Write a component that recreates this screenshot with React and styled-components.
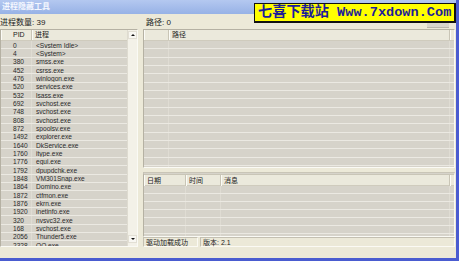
import React from 'react'
import styled, { createGlobalStyle } from 'styled-components'

const GlobalStyle = createGlobalStyle`
  html, body {
    margin: 0;
    padding: 0;
    background: #ece9d8;
  }
  * {
    box-sizing: border-box;
  }
`

const processes = [
  ['0', '<System Idle>'],
  ['4', '<System>'],
  ['380', 'smss.exe'],
  ['452', 'csrss.exe'],
  ['476', 'winlogon.exe'],
  ['520', 'services.exe'],
  ['532', 'lsass.exe'],
  ['692', 'svchost.exe'],
  ['748', 'svchost.exe'],
  ['808', 'svchost.exe'],
  ['872', 'spoolsv.exe'],
  ['1492', 'explorer.exe'],
  ['1640', 'DkService.exe'],
  ['1760', 'itype.exe'],
  ['1776', 'egui.exe'],
  ['1792', 'dpupdchk.exe'],
  ['1848', 'VM301Snap.exe'],
  ['1864', 'Domino.exe'],
  ['1872', 'ctfmon.exe'],
  ['1876', 'ekrn.exe'],
  ['1920', 'inetinfo.exe'],
  ['320', 'nvsvc32.exe'],
  ['168', 'svchost.exe'],
  ['2056', 'Thunder5.exe'],
  ['2328', 'QQ.exe'],
]

const font = `"Liberation Sans", "Noto Sans CJK SC", sans-serif`

const Window = styled.div`
  position: relative;
  width: 459px;
  height: 261px;
  background: #ece9d8;
  border-right: 3px solid #4a5cd0;
  border-bottom: 3px solid #4a5cd0;
  font-family: ${font};
  color: #222;
  overflow: hidden;
  display: flex;
  flex-direction: column;
`

const TitleBar = styled.div`
  height: 14px;
  flex: none;
  padding-left: 2px;
  background: linear-gradient(to bottom, #b4c8f0, #97b2e6);
  color: #f4f7ff;
  font-size: 8px;
  line-height: 14px;
  font-weight: bold;
`

const Body = styled.div`
  flex: 1;
  display: flex;
  gap: 5px;
  padding: 0 1px 11px 0;
  min-height: 0;
`

const Column = styled.div`
  width: ${(p) => p.$width || 'auto'};
  flex: ${(p) => (p.$width ? 'none' : '1')};
  display: flex;
  flex-direction: column;
  min-width: 0;
`

const LabelRow = styled.div`
  height: 15px;
  flex: none;
  display: flex;
  align-items: center;
  justify-content: space-between;
  padding-left: ${(p) => p.$pad || 0}px;
  font-size: 8px;
`

const SmallButton = styled.div`
  width: 22px;
  height: 12px;
  margin-right: 6px;
  background: #d8d5cb;
  border-bottom: 1px solid #b9b6ab;
`

const ListBox = styled.div`
  height: ${(p) => p.$height}px;
  flex: none;
  display: flex;
  background: #d6d3ca;
  border-top: ${(p) => (p.$thick ? '3px double #c9c5b7' : '1px solid #b5b1a3')};
  border-left: 1px solid #b5b1a3;
  border-right: 1px solid #fafaf5;
  border-bottom: 1px solid #fafaf5;
  overflow: hidden;
`

const ListMain = styled.div`
  flex: 1;
  min-width: 0;
  overflow: hidden;
`

const Grid = styled.div`
  display: grid;
  grid-template-columns: ${(p) => p.$cols};
`

const Header = styled(Grid)`
  height: ${(p) => p.$h || 11}px;
  background: #ebe9dc;
  border-bottom: 1px solid #cfcbbd;
`

const HeadCell = styled.div`
  padding-left: ${(p) => p.$pad ?? 3}px;
  font-size: 7px;
  line-height: ${(p) => p.$h || 10}px;
  white-space: nowrap;
  border-right: 1px solid #c9c5b6;
  box-shadow: inset 1px 0 0 #fbfbf6;
  &:last-child {
    border-right: none;
  }
`

const Row = styled(Grid)`
  height: ${(p) => p.$h || 8.35}px;
  border-bottom: 1px solid #ebe9e2;
`

const Cell = styled.div`
  padding-left: ${(p) => p.$pad ?? 3}px;
  padding-top: 0.5px;
  font-size: 6.6px;
  line-height: 7.3px;
  color: #2a2a2a;
  white-space: nowrap;
  overflow: hidden;
  border-right: 1px solid #dfdcd3;
  &:last-child {
    border-right: none;
  }
`

const ScrollBar = styled.div`
  width: 10px;
  flex: none;
  display: flex;
  flex-direction: column;
  justify-content: space-between;
  background: #f3f1e8;
  border-left: 1px solid #dedbd0;
  padding: 1px 0 3px;
`

const ArrowButton = styled.div`
  height: 8px;
  display: flex;
  align-items: center;
  justify-content: center;
  background: #f8f7f2;
  border: 1px solid #e2dfd4;
  &::after {
    content: '';
    border-left: 2px solid transparent;
    border-right: 2px solid transparent;
    ${(p) => (p.$down ? 'border-top: 2px solid #111;' : 'border-bottom: 2px solid #111;')}
  }
`

const Gap = styled.div`
  height: 4px;
  flex: none;
`

const StatusBar = styled.div`
  height: 10px;
  flex: none;
  display: flex;
  gap: 2px;
`

const StatusPanel = styled.div`
  width: ${(p) => p.$width || 'auto'};
  flex: ${(p) => (p.$width ? 'none' : '1')};
  padding-left: 2px;
  font-size: 7px;
  line-height: 9px;
  border-top: 1px solid #c4c0b2;
  border-left: 1px solid #c4c0b2;
  border-right: 1px solid #fbfaf4;
  border-bottom: 1px solid #fbfaf4;
`

const Banner = styled.div`
  position: absolute;
  left: 254px;
  top: 3px;
  width: 202px;
  height: 20px;
  background: #ffff00;
  border: 1px solid #111;
  border-right-width: 2px;
  border-bottom-width: 2px;
  color: #1c1c9a;
  font-family: "Liberation Mono", "Noto Sans CJK SC", monospace;
  font-weight: bold;
  font-size: 13.6px;
  line-height: 17px;
  padding-left: 3px;
  white-space: nowrap;
`

const BannerCjk = styled.span`
  font-size: 14.2px;
`

const emptyRows = (n) => Array.from({ length: n }, (_, i) => i)

const App = () => {
  return (
    <>
      <GlobalStyle />
      <Window>
        <TitleBar>进程隐藏工具</TitleBar>
        <Body>
          <Column $width="138px">
            <LabelRow>进程数量: 39</LabelRow>
            <ListBox $height={218}>
              <ListMain>
                <Header $cols="31px 1fr">
                  <HeadCell $pad={12}>PID</HeadCell>
                  <HeadCell>进程</HeadCell>
                </Header>
                {processes.map(([pid, name], i) => (
                  <Row key={i} $cols="31px 1fr">
                    <Cell $pad={12}>{pid}</Cell>
                    <Cell $pad={4}>{name}</Cell>
                  </Row>
                ))}
              </ListMain>
              <ScrollBar>
                <ArrowButton />
                <ArrowButton $down />
              </ScrollBar>
            </ListBox>
          </Column>

          <Column>
            <LabelRow $pad={3}>
              <span>路径: 0</span>
              <SmallButton />
            </LabelRow>
            <ListBox $height={139}>
              <ListMain>
                <Header $cols="25px 1fr 4px">
                  <HeadCell />
                  <HeadCell>路径</HeadCell>
                  <HeadCell />
                </Header>
                {emptyRows(16).map((i) => (
                  <Row key={i} $cols="25px 1fr 4px">
                    <Cell />
                    <Cell />
                    <Cell />
                  </Row>
                ))}
              </ListMain>
            </ListBox>
            <Gap />
            <ListBox $height={65} $thick>
              <ListMain>
                <Header $cols="42px 35px 1fr 4px" $h={11}>
                  <HeadCell $h={11}>日期</HeadCell>
                  <HeadCell $h={11}>时间</HeadCell>
                  <HeadCell $h={11}>消息</HeadCell>
                  <HeadCell $h={11} />
                </Header>
                {emptyRows(7).map((i) => (
                  <Row key={i} $cols="42px 35px 1fr 4px" $h={8}>
                    <Cell />
                    <Cell />
                    <Cell />
                    <Cell />
                  </Row>
                ))}
              </ListMain>
            </ListBox>
            <StatusBar>
              <StatusPanel $width="55px">驱动加载成功</StatusPanel>
              <StatusPanel>版本: 2.1</StatusPanel>
            </StatusBar>
          </Column>
        </Body>
        <Banner>
          <BannerCjk>七喜下载站</BannerCjk> Www.7xdown.Com
        </Banner>
      </Window>
    </>
  )
}

export default App
